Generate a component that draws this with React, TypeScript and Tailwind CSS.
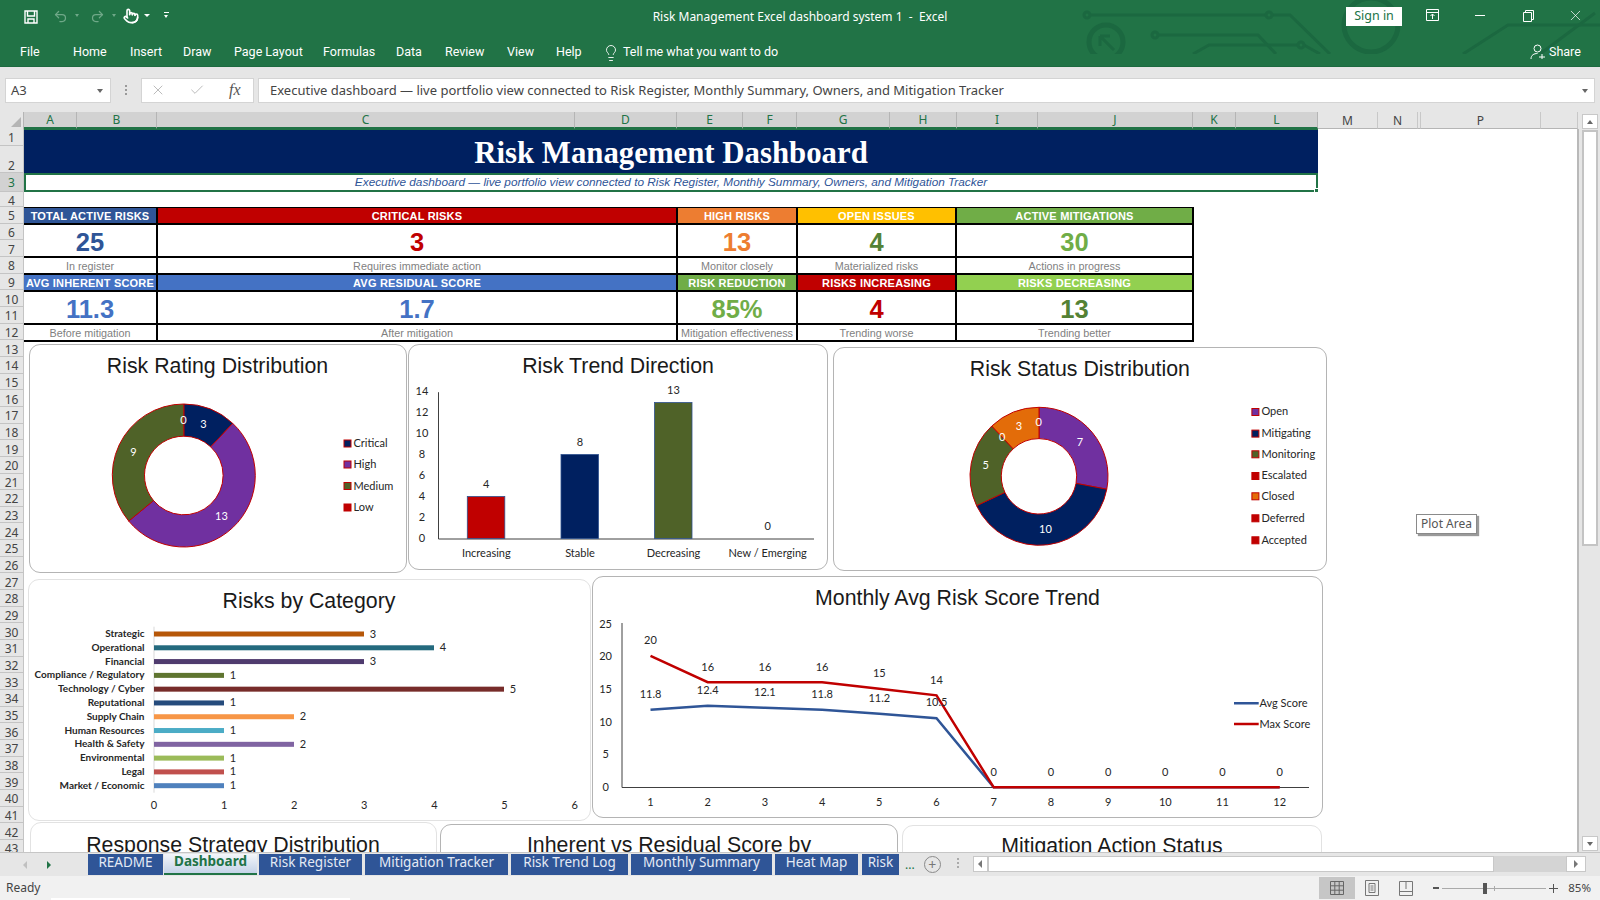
import type { ReactNode } from "react";
import { Check, Lightbulb, Pointer, Redo2, Undo2, X } from "lucide-react";

const sans = "font-['Liberation_Sans',Arial,sans-serif]";

const ribbonTabs = [
  { label: "File", cls: "w-[53px]" },
  { label: "Home", cls: "w-[57px]" },
  { label: "Insert", cls: "w-[53px]" },
  { label: "Draw", cls: "w-[51px]" },
  { label: "Page Layout", cls: "w-[89px]" },
  { label: "Formulas", cls: "w-[73px]" },
  { label: "Data", cls: "w-[49px]" },
  { label: "Review", cls: "w-[62px]" },
  { label: "View", cls: "w-[49px]" },
  { label: "Help", cls: "w-[49px]" },
];

const columns = [
  { label: "A", cls: "w-[53px]", on: true },
  { label: "B", cls: "w-[80px]", on: true },
  { label: "C", cls: "w-[418px]", on: true },
  { label: "D", cls: "w-[102px]", on: true },
  { label: "E", cls: "w-[66px]", on: true },
  { label: "F", cls: "w-[54px]", on: true },
  { label: "G", cls: "w-[93px]", on: true },
  { label: "H", cls: "w-[67px]", on: true },
  { label: "I", cls: "w-[81px]", on: true },
  { label: "J", cls: "w-[155px]", on: true },
  { label: "K", cls: "w-[43px]", on: true },
  { label: "L", cls: "w-[82px]", on: true },
  { label: "M", cls: "w-[60px]", on: false },
  { label: "N", cls: "w-[40px]", on: false },
  { label: "", cls: "w-[3px]", on: false },
  { label: "P", cls: "w-[120px]", on: false },
  { label: "", cls: "w-[37px]", on: false },
];

const rowHeads = [
  { n: 1, cls: "h-[17px] items-center" },
  { n: 2, cls: "h-[27px] items-center pt-[13px]" },
  { n: 3, cls: "h-[19px] items-center bg-[#d2d2d2] text-[#217346]" },
  { n: 4, cls: "h-[15px] items-center pt-[2px]" },
  ...Array.from({ length: 39 }, (_, i) => ({ n: i + 5, cls: "h-[16.67px] items-center pt-[2px]" })),
];

const kpiRows = [
  [
    { head: "TOTAL ACTIVE RISKS", bg: "bg-[#2f5597]", value: "25", color: "text-[#2f5597]", sub: "In register" },
    { head: "CRITICAL RISKS", bg: "bg-[#c00000]", value: "3", color: "text-[#c00000]", sub: "Requires immediate action" },
    { head: "HIGH RISKS", bg: "bg-[#ed7d31]", value: "13", color: "text-[#ed7d31]", sub: "Monitor closely" },
    { head: "OPEN ISSUES", bg: "bg-[#ffc000]", value: "4", color: "text-[#548235]", sub: "Materialized risks" },
    { head: "ACTIVE MITIGATIONS", bg: "bg-[#70ad47]", value: "30", color: "text-[#70ad47]", sub: "Actions in progress" },
  ],
  [
    { head: "AVG INHERENT SCORE", bg: "bg-[#4472c4]", value: "11.3", color: "text-[#4472c4]", sub: "Before mitigation" },
    { head: "AVG RESIDUAL SCORE", bg: "bg-[#4472c4]", value: "1.7", color: "text-[#4472c4]", sub: "After mitigation" },
    { head: "RISK REDUCTION", bg: "bg-[#70ad47]", value: "85%", color: "text-[#70ad47]", sub: "Mitigation effectiveness" },
    { head: "RISKS INCREASING", bg: "bg-[#c00000]", value: "4", color: "text-[#c00000]", sub: "Trending worse" },
    { head: "RISKS DECREASING", bg: "bg-[#92d050]", value: "13", color: "text-[#548235]", sub: "Trending better" },
  ],
];

const sheetTabs = [
  { label: "README", cls: "w-[75px] ml-[88px]" },
  { label: "Dashboard", cls: "w-[93px] ml-[1px]", active: true },
  { label: "Risk Register", cls: "w-[103px] ml-[2px]" },
  { label: "Mitigation Tracker", cls: "w-[143px] ml-[3px]" },
  { label: "Risk Trend Log", cls: "w-[117px] ml-[3px]" },
  { label: "Monthly Summary", cls: "w-[141px] ml-[3px]" },
  { label: "Heat Map", cls: "w-[83px] ml-[3px]" },
  { label: "Risk", cls: "w-[37px] ml-[4px]" },
];

const polar = (cx: number, cy: number, r: number, deg: number) => {
  const a = ((deg - 90) * Math.PI) / 180;
  return [cx + r * Math.cos(a), cy + r * Math.sin(a)];
};

const Donut = ({ cx, cy, r, inner, parts }: { cx: number; cy: number; r: number; inner: number; parts: { v: number; fill: string }[] }) => {
  const total = parts.reduce((s, p) => s + p.v, 0);
  let start = 0;
  return (
    <g>
      {parts.map((p, i) => {
        const end = start + (p.v / total) * 360;
        const [x1, y1] = polar(cx, cy, r, start);
        const [x2, y2] = polar(cx, cy, r, end);
        const [x3, y3] = polar(cx, cy, inner, end);
        const [x4, y4] = polar(cx, cy, inner, start);
        const big = end - start > 180 ? 1 : 0;
        const d = `M${x1} ${y1}A${r} ${r} 0 ${big} 1 ${x2} ${y2}L${x3} ${y3}A${inner} ${inner} 0 ${big} 0 ${x4} ${y4}Z`;
        start = end;
        return <path key={i} d={d} fill={p.fill} stroke="#c00000" strokeWidth="1" />;
      })}
    </g>
  );
};

const Label = ({ x, y, t, fill = "#262626", size = 11, anchor = "middle", weight }: { x: number; y: number; t: string; fill?: string; size?: number; anchor?: "middle" | "start" | "end"; weight?: number }) => (
  <text x={x} y={y - 1} fill={fill} fontSize={size} textAnchor={anchor} dominantBaseline="central" fontWeight={weight}>
    {t}
  </text>
);

const LegendRow = ({ x, y, t, fill }: { x: number; y: number; t: string; fill: string }) => (
  <g>
    <rect x={x + 0.5} y={y - 3.5} width="7" height="7" fill={fill} stroke="#c00000" strokeWidth="1" />
    <Label x={x + 10} y={y} t={t} anchor="start" />
  </g>
);

const Card = ({ cls, title, titleCls, box, children }: { cls: string; title: string; titleCls: string; box?: string; children?: ReactNode }) => (
  <div className={`shrink-0 flex flex-col rounded-[11px] border bg-white overflow-hidden ${cls}`}>
    <div className={`shrink-0 text-center text-[21.3px] leading-none text-[#1a1a1a] ${sans} ${titleCls}`}>{title}</div>
    {children && (
      <svg viewBox={box} className="w-full flex-1 min-h-0 overflow-visible font-['Lato',sans-serif]" preserveAspectRatio="xMinYMin meet">
        {children}
      </svg>
    )}
  </div>
);

const RatingChart = () => (
  <Card cls="w-[378px] h-[229px] border-[#b4b4b4]" titleCls="pt-[11px] h-[40px]" title="Risk Rating Distribution" box="29.5 384.5 376 187">
    <Donut cx={183.3} cy={475} r={71.5} inner={39.3} parts={[{ v: 3, fill: "#002060" }, { v: 13, fill: "#7030a0" }, { v: 9, fill: "#4f6228" }]} />
    <Label x={183} y={420} t="0" fill="#fff" />
    <Label x={203} y={424} t="3" fill="#fff" />
    <Label x={221} y={516} t="13" fill="#fff" />
    <Label x={133} y={452} t="9" fill="#fff" />
    <LegendRow x={343} y={443} t="Critical" fill="#002060" />
    <LegendRow x={343} y={464} t="High" fill="#7030a0" />
    <LegendRow x={343} y={485.5} t="Medium" fill="#4f6228" />
    <LegendRow x={343} y={507} t="Low" fill="#c00000" />
  </Card>
);

const TrendChart = () => {
  const bars = [
    { x: 467.3, top: 496, fill: "#c00000", t: "4", l: "Increasing", ly: 483.7 },
    { x: 561, top: 454, fill: "#002060", t: "8", l: "Stable", ly: 442 },
    { x: 654.5, top: 402, fill: "#4f6228", t: "13", l: "Decreasing", ly: 389.7 },
  ];
  return (
    <Card cls="w-[420px] h-[226px] ml-[1.5px] border-[#b4b4b4]" titleCls="pt-[11px] h-[40px]" title="Risk Trend Direction" box="409 384.5 418 184">
      {[14, 12, 10, 8, 6, 4, 2, 0].map((n) => (
        <Label key={n} x={422} y={538 - n * 10.48} t={String(n)} />
      ))}
      <path d="M438.5 391.7V538.5H814" fill="none" stroke="#404040" strokeWidth="1" />
      {bars.map((b) => (
        <g key={b.t}>
          <rect x={b.x} y={b.top} width="37.5" height={538 - b.top} fill={b.fill} stroke="#2f528f" strokeWidth="0.8" />
          <Label x={b.x + 19} y={b.ly} t={b.t} />
          <Label x={b.x + 19} y={553} t={b.l} />
        </g>
      ))}
      <Label x={767.7} y={526} t="0" />
      <Label x={767.7} y={553} t="New / Emerging" />
    </Card>
  );
};

const StatusChart = () => (
  <Card cls="w-[494.5px] h-[224px] ml-[4.6px] mt-[3px] border-[#b4b4b4]" titleCls="pt-[11px] h-[40px]" title="Risk Status Distribution" box="833.6 387.7 492.5 182">
    <Donut cx={1038.6} cy={476} r={69} inner={37.7} parts={[{ v: 7, fill: "#7030a0" }, { v: 10, fill: "#002060" }, { v: 5, fill: "#4f6228" }, { v: 3, fill: "#e36c09" }]} />
    <Label x={1079.6} y={442} t="7" fill="#fff" />
    <Label x={1045} y={529} t="10" fill="#fff" />
    <Label x={985.4} y={465} t="5" fill="#fff" />
    <Label x={1001.8} y={437} t="0" fill="#fff" />
    <Label x={1018.6} y={426} t="3" fill="#fff" />
    <Label x={1038.4} y={422} t="0" fill="#fff" />
    <LegendRow x={1251} y={411.7} t="Open" fill="#7030a0" />
    <LegendRow x={1251} y={433.3} t="Mitigating" fill="#002060" />
    <LegendRow x={1251} y={454} t="Monitoring" fill="#4f6228" />
    <LegendRow x={1251} y={475.7} t="Escalated" fill="#c00000" />
    <LegendRow x={1251} y={496} t="Closed" fill="#e36c09" />
    <LegendRow x={1251} y={518} t="Deferred" fill="#c00000" />
    <LegendRow x={1251} y={540} t="Accepted" fill="#c00000" />
  </Card>
);

const categories = [
  { l: "Strategic", v: 3, fill: "#b65708" },
  { l: "Operational", v: 4, fill: "#246a7e" },
  { l: "Financial", v: 3, fill: "#4f3b6e" },
  { l: "Compliance / Regulatory", v: 1, fill: "#5f7530" },
  { l: "Technology / Cyber", v: 5, fill: "#772c2a" },
  { l: "Reputational", v: 1, fill: "#254b7c" },
  { l: "Supply Chain", v: 2, fill: "#f79646" },
  { l: "Human Resources", v: 1, fill: "#4bacc6" },
  { l: "Health & Safety", v: 2, fill: "#8064a2" },
  { l: "Environmental", v: 1, fill: "#9bbb59" },
  { l: "Legal", v: 1, fill: "#c0504d" },
  { l: "Market / Economic", v: 1, fill: "#4f81bd" },
];

const CategoryChart = () => (
  <Card cls="w-[563px] h-[242px] mt-[3px] border-[#e2e2e2]" titleCls="pt-[11px] h-[44px]" title="Risks by Category" box="28.5 624 561 196">
    <path d="M153.5 626.7V792.7" stroke="#d9d9d9" strokeWidth="1" />
    {categories.map((c, i) => {
      const y = 634 + i * 13.79;
      return (
        <g key={c.l}>
          <Label x={144} y={y} t={c.l} anchor="end" weight={700} size={10} />
          <rect x={153.5} y={y - 2.5} width={c.v * 70} height="5" fill={c.fill} />
          <Label x={153.5 + c.v * 70 + 9} y={y} t={String(c.v)} />
        </g>
      );
    })}
    {[0, 1, 2, 3, 4, 5, 6].map((n) => (
      <Label key={n} x={153.5 + n * 70.1} y={805.7} t={String(n)} />
    ))}
  </Card>
);

const avg = [11.8, 12.4, 12.1, 11.8, 11.2, 10.5, 0, 0, 0, 0, 0, 0];
const max = [20, 16, 16, 16, 15, 14, 0, 0, 0, 0, 0, 0];
const px = (i: number) => 650.5 + i * 57.2;
const py = (v: number) => 787.3 - v * 6.57;
const pts = (vals: number[]) => vals.map((v, i) => `${px(i)},${py(v)}`).join(" ");

const MonthlyChart = () => (
  <Card cls="w-[731px] h-[242px] ml-[1.5px] border-[#b4b4b4]" titleCls="pt-[11px] h-[44px]" title="Monthly Avg Risk Score Trend" box="593 621 729 196">
    {[25, 20, 15, 10, 5, 0].map((n) => (
      <Label key={n} x={605.6} y={787.3 - n * 6.52} t={String(n)} />
    ))}
    <path d="M622 623V787.5H1309" fill="none" stroke="#404040" strokeWidth="1" />
    <polyline points={pts(avg)} fill="none" stroke="#2f5597" strokeWidth="2.5" />
    <polyline points={pts(max)} fill="none" stroke="#c00000" strokeWidth="2.5" />
    {avg.slice(0, 6).map((v, i) => (
      <Label key={i} x={px(i)} y={py(v) - 15.5} t={v.toFixed(1)} />
    ))}
    {max.map((v, i) => (
      <Label key={i} x={px(i)} y={py(v) - 15} t={String(v)} />
    ))}
    {avg.map((_, i) => (
      <Label key={i} x={px(i)} y={802} t={String(i + 1)} />
    ))}
    <path d="M1234 703.3H1258.7" stroke="#2f5597" strokeWidth="2.5" />
    <path d="M1234 724H1258.7" stroke="#c00000" strokeWidth="2.5" />
    <Label x={1259.5} y={703} t="Avg Score" anchor="start" />
    <Label x={1259.5} y={724} t="Max Score" anchor="start" />
  </Card>
);

// grid cells go row by row, so split each block into three lines
const KpiTable = () => {
  const cells = kpiRows.flatMap((row) => [
    row.map((k) => ({ key: k.head, cls: `${k.bg} pt-px text-[11px] font-bold text-white tracking-[0.2px]`, t: k.head })),
    row.map((k) => ({ key: k.head + "v", cls: `bg-white pt-[3px] text-[25.5px] font-bold ${k.color}`, t: k.value })),
    row.map((k) => ({ key: k.head + "s", cls: "bg-white pt-px text-[10.8px] text-[#7f7f7f]", t: k.sub })),
  ]).flat();
  return (
    <div className={`mt-[15px] w-[1170px] grid grid-cols-[132px_518px_118px_157px_235px] grid-rows-[15px_31px_15px_15px_31px_15px] gap-[2px] bg-black pt-px pr-[2px] pb-[2px] ${sans}`}>
      {cells.map((c) => (
        <div key={c.key} className={`flex items-center justify-center whitespace-nowrap overflow-hidden ${c.cls}`}>
          {c.t}
        </div>
      ))}
    </div>
  );
};

const TitleBar = () => (
  <div className="relative h-[67px] shrink-0 bg-[#217346] text-white border-b border-[#1d6a40] overflow-hidden">
    {/* Circuit decoration */}
    <svg className="absolute left-[1060px] top-0 h-[54px] w-[540px]" viewBox="1060 0 540 54" fill="none" stroke="#1b6840" strokeWidth="3">
      <circle cx="1087" cy="15" r="3" />
      <path d="M1090 15H1266M1272 15H1290L1330 54" />
      <circle cx="1269" cy="15" r="3" />
      <circle cx="1106" cy="42" r="17" strokeWidth="5" />
      <path d="M1100 36L1114 50M1100 36H1110M1100 36V46" />
      <circle cx="1155" cy="35" r="3" />
      <path d="M1158 35H1258L1276 54" />
      <path d="M1193 54L1209 45H1298M1304 45L1320 54" />
      <circle cx="1301" cy="45" r="3" />
      <circle cx="1371" cy="25" r="27" strokeWidth="5" />
      <path d="M1463 54L1508 25H1600" />
      <path d="M1540 54L1595 13" />
    </svg>
    <div className="relative flex h-[33px] items-center">
      <svg className="absolute left-[24px] top-[10px] h-[14px] w-[14px]" viewBox="0 0 14 14" fill="none" stroke="#fff" strokeWidth="1.4">
        <path d="M1 1H13V13H1Z" />
        <path d="M3.5 1V6H10.5V1M4 13V9H10V13" />
      </svg>
      <Undo2 className="absolute left-[53px] top-[9px] text-[#6fa888]" size={15} />
      <div className="absolute left-[75px] top-[14px] h-0 w-0 border-x-[2.5px] border-t-[3px] border-x-transparent border-t-[#6fa888]" />
      <Redo2 className="absolute left-[90px] top-[9px] text-[#6fa888]" size={15} />
      <div className="absolute left-[112px] top-[14px] h-0 w-0 border-x-[2.5px] border-t-[3px] border-x-transparent border-t-[#6fa888]" />
      <Pointer className="absolute left-[123px] top-[8px] text-white" size={16} strokeWidth={2.4} />
      <div className="absolute left-[144px] top-[14px] h-0 w-0 border-x-[3px] border-t-[3px] border-x-transparent border-t-white" />
      <div className="absolute left-[164px] top-[12px] h-px w-[5px] bg-white" />
      <div className="absolute left-[164px] top-[15px] h-0 w-0 border-x-[2.5px] border-t-[3px] border-x-transparent border-t-white" />
      <div className="w-full text-center text-[12px]">Risk Management Excel dashboard system 1&nbsp; -&nbsp; Excel</div>
      <div className="absolute left-[1346px] top-[7px] flex h-[19px] w-[56px] items-center justify-center bg-white text-[12.5px] text-[#217346]">Sign in</div>
      <svg className="absolute left-[1426px] top-[9px] h-[13px] w-[13px]" viewBox="0 0 13 13" fill="none" stroke="#fff">
        <path d="M.5 .5H12.5V11.5H.5ZM.5 3.5H12.5M6.5 10V5M4.5 7L6.5 5L8.5 7" />
      </svg>
      <div className="absolute left-[1475px] top-[15px] h-px w-[10px] bg-white" />
      <svg className="absolute left-[1523px] top-[10px] h-[12px] w-[11px]" viewBox="0 0 11 12" fill="none" stroke="#fff">
        <path d="M.5 2.5H8.5V11.5H.5ZM2.5 2.5V.5H10.5V9.5H8.5" />
      </svg>
      <X className="absolute left-[1567px] top-[7px]" size={17} strokeWidth={1} />
    </div>
    <div className="relative flex h-[33px] items-center pl-[20px] pt-[6px] font-['Roboto',sans-serif] text-[12.5px]">
      {ribbonTabs.map((t) => (
        <div key={t.label} className={t.cls}>{t.label}</div>
      ))}
      <Lightbulb size={18} strokeWidth={1.2} className="-ml-[3px] mr-[3px]" />
      <div>Tell me what you want to do</div>
      <div className="absolute left-[1530px] top-[10px] flex items-center gap-[3px]">
        <svg className="h-[16px] w-[16px]" viewBox="0 0 16 16" fill="none" stroke="#fff">
          <circle cx="7.5" cy="4.5" r="3.5" />
          <path d="M1 15C1 11 4 9.5 7.5 9.5M9 13H15M12 10V15" />
        </svg>
        <span>Share</span>
      </div>
    </div>
  </div>
);

const FormulaBar = () => (
  <div className="flex h-[45px] shrink-0 items-center bg-[#e6e6e6] pl-[5px] pr-[5px] pt-px text-[13px] text-[#444]">
    <div className="flex h-[25px] w-[106px] items-center justify-between border border-[#d4d4d4] bg-white pl-[5px] pr-[7px] pt-px">
      <span>A3</span>
      <div className="h-0 w-0 border-x-[3px] border-t-[4px] border-x-transparent border-t-[#666]" />
    </div>
    <div className="mx-[14px] flex flex-col gap-[2px]">
      <div className="h-[2px] w-[2px] bg-[#999]" />
      <div className="h-[2px] w-[2px] bg-[#999]" />
      <div className="h-[2px] w-[2px] bg-[#999]" />
    </div>
    <div className="flex h-[25px] w-[113px] items-center border border-[#d4d4d4] bg-white pl-[8px]">
      <X size={16} strokeWidth={1.5} className="text-[#bcbcbc]" />
      <Check size={16} strokeWidth={1.5} className="ml-[23px] text-[#bcbcbc]" />
      <span className="ml-[24px] font-['Liberation_Serif',serif] italic text-[16px] text-[#555]">fx</span>
    </div>
    <div className="ml-[4px] flex h-[25px] flex-1 items-center justify-between border border-[#d4d4d4] bg-white pl-[11px] pr-[6px] pt-px">
      <span>Executive dashboard — live portfolio view connected to Risk Register, Monthly Summary, Owners, and Mitigation Tracker</span>
      <div className="h-0 w-0 border-x-[3.5px] border-t-[4px] border-x-transparent border-t-[#666]" />
    </div>
  </div>
);

const ColumnHeader = () => (
  <div className="flex h-[17px] shrink-0 bg-[#e6e6e6] text-[12px] text-[#444]">
    <div className="flex w-[24px] items-end justify-end border-r border-[#b5b5b5] p-[2px]">
      <div className="h-0 w-0 border-b-[10px] border-l-[10px] border-b-[#b5b5b5] border-l-transparent" />
    </div>
    {columns.map((c, i) => (
      <div
        key={i}
        className={`flex items-center justify-center border-r pt-px ${c.cls} ${c.on ? "bg-[#d2d2d2] border-[#b5b5b5] border-b-2 border-b-[#217346] text-[#217346]" : "border-[#c8c8c8] border-b border-b-[#b5b5b5]"}`}
      >
        {c.label}
      </div>
    ))}
  </div>
);

const RowHeader = () => (
  <div className="w-[24px] shrink-0 overflow-hidden bg-[#e6e6e6] text-[12px] text-[#444]">
    {rowHeads.map((r) => (
      <div key={r.n} className={`flex justify-center border-b border-r border-[#c4c4c4] leading-[15px] ${r.cls}`}>
        {r.n}
      </div>
    ))}
  </div>
);

const VerticalScroll = () => (
  <div className="flex w-[21px] shrink-0 flex-col items-center bg-[#e6e6e6] pt-[2px] pb-[1px]">
    <div className="flex h-[15px] w-[16px] items-center justify-center border border-[#c8c8c8] bg-white">
      <div className="h-0 w-0 border-x-[3.5px] border-b-[4px] border-x-transparent border-b-[#666]" />
    </div>
    <div className="mt-px h-[416px] w-[16px] border-2 border-[#c4c4c4] bg-white" />
    <div className="flex-1" />
    <div className="flex h-[15px] w-[16px] items-center justify-center border border-[#c8c8c8] bg-white">
      <div className="h-0 w-0 border-x-[3.5px] border-t-[4px] border-x-transparent border-t-[#666]" />
    </div>
  </div>
);

const Sheet = () => (
  <div className="relative flex-1 overflow-hidden border-r-2 border-[#b9b9b9] bg-white">
    <div className="flex h-[44px] w-[1294px] items-center justify-center border-t border-[#217346] bg-[#002060] pt-[4px] font-['Liberation_Serif',serif] text-[30.8px] font-bold text-white">
      Risk Management Dashboard
    </div>
    <div className={`relative flex h-[19px] w-[1294px] items-center justify-center border-2 border-[#217346] pt-px text-[11.8px] italic text-[#2f5597] ${sans}`}>
      Executive dashboard — live portfolio view connected to Risk Register, Monthly Summary, Owners, and Mitigation Tracker
      <div className="absolute -bottom-[3px] -right-[3px] h-[5px] w-[5px] border border-white bg-[#217346]" />
    </div>
    <KpiTable />
    <div className="ml-[4.5px] mt-[1.5px] flex items-start">
      <RatingChart />
      <TrendChart />
      <StatusChart />
    </div>
    <div className="ml-[3.5px] mt-[3.3px] flex items-start">
      <CategoryChart />
      <MonthlyChart />
    </div>
    <div className="ml-[5.5px] flex items-start">
      <Card cls="w-[407px] h-[200px] mt-[1.5px] border-[#e2e2e2]" titleCls="pt-[12px]" title="Response Strategy Distribution" />
      <Card cls="w-[458px] h-[200px] mt-[3.5px] ml-[3.5px] border-[#b4b4b4]" titleCls="pt-[10px]" title="Inherent vs Residual Score by" />
      <Card cls="w-[420px] h-[200px] mt-[4px] ml-[4px] border-[#e2e2e2]" titleCls="pt-[10px]" title="Mitigation Action Status" />
    </div>
    {/* Chart tooltip */}
    <div className="absolute left-[1392px] top-[385px] flex h-[20px] w-[61px] items-center justify-center border border-[#8a8a8a] bg-white text-[12px] text-[#555] shadow-[2px_2px_1px_#9a9a9a]">
      Plot Area
    </div>
  </div>
);

const TabBar = () => (
  <div className="relative flex h-[24px] shrink-0 items-start border-t border-[#c6c6c6] bg-[#e6e6e6] pt-px text-[13.5px]">
    <div className="absolute left-[23px] top-[8px] h-0 w-0 border-y-[4px] border-r-[4px] border-y-transparent border-r-[#c0c0c0]" />
    <div className="absolute left-[47px] top-[8px] h-0 w-0 border-y-[4px] border-l-[4px] border-y-transparent border-l-[#217346]" />
    {sheetTabs.map((t) => (
      <div
        key={t.label}
        className={`flex h-[21px] shrink-0 items-center justify-center overflow-hidden pb-[4px] ${t.cls} ${t.active ? "bg-gradient-to-b from-[#f4f6fa] to-[#c5d3e8] border-b-2 border-[#217346] font-bold text-[#217346]" : "bg-[#2f5597] text-[#e4eaf5]"}`}
      >
        {t.label}
      </div>
    ))}
    <div className="ml-[6px] mt-[4px] text-[12px] leading-[14px] text-[#217346]">...</div>
    <div className="ml-[9px] mt-[2px] flex h-[17px] w-[17px] items-center justify-center rounded-full border border-[#8a8a8a] text-[14px] leading-none text-[#777]">+</div>
    <div className="ml-[16px] mt-[4px] flex flex-col gap-[2px]">
      <div className="h-[2px] w-[2px] bg-[#aaa]" />
      <div className="h-[2px] w-[2px] bg-[#aaa]" />
      <div className="h-[2px] w-[2px] bg-[#aaa]" />
    </div>
    <div className="ml-[14px] mt-[2px] flex h-[16px] w-[613px] bg-[#d4d4d4]">
      <div className="flex w-[15px] items-center justify-center border border-[#c8c8c8] bg-white">
        <div className="h-0 w-0 border-y-[4px] border-r-[4px] border-y-transparent border-r-[#777]" />
      </div>
      <div className="w-[506px] border border-[#c8c8c8] bg-white" />
      <div className="flex-1" />
      <div className="flex w-[20px] items-center justify-center border border-[#c8c8c8] bg-white">
        <div className="h-0 w-0 border-y-[4px] border-l-[4px] border-y-transparent border-l-[#777]" />
      </div>
    </div>
  </div>
);

const StatusBar = () => (
  <div className="relative flex h-[24px] shrink-0 items-center bg-[#f1f1f1] pl-[6px] text-[12px] text-[#444]">
    <span>Ready</span>
    <div className="absolute bottom-0 left-[51px] h-[2px] w-[299px] bg-white" />
    <div className="flex-1" />
    <div className="flex h-[22px] w-[36px] items-center justify-center bg-[#c6c6c6]">
      <svg className="h-[14px] w-[14px]" viewBox="0 0 14 14" fill="none" stroke="#666">
        <path d="M.5 .5H13.5V13.5H.5ZM.5 4.8H13.5M.5 9.2H13.5M4.8 .5V13.5M9.2 .5V13.5" />
      </svg>
    </div>
    <svg className="ml-[10px] h-[16px] w-[14px]" viewBox="0 0 14 16" fill="none" stroke="#777">
      <path d="M.5 .5H13.5V15.5H.5ZM4 3.5H10V12.5H4ZM5.5 6H8.5M5.5 8H8.5M5.5 10H8.5" />
    </svg>
    <svg className="ml-[20px] h-[15px] w-[14px]" viewBox="0 0 14 15" fill="none" stroke="#777">
      <path d="M.5 .5H13.5V14.5H.5ZM.5 10.5H13.5M7 .5V8" />
    </svg>
    <div className="ml-[20px] h-[2px] w-[6px] bg-[#555]" />
    <div className="relative ml-[3px] h-px w-[104px] bg-[#aaa]">
      <div className="absolute left-[41px] -top-[5px] h-[11px] w-[4px] bg-[#555]" />
      <div className="absolute left-[52px] -top-[2px] h-[5px] w-px bg-[#aaa]" />
    </div>
    <div className="relative ml-[3px] h-[9px] w-[9px]">
      <div className="absolute left-0 top-[4px] h-px w-[9px] bg-[#555]" />
      <div className="absolute left-[4px] top-0 h-[9px] w-px bg-[#555]" />
    </div>
    <span className="ml-[10px] mr-[9px] text-[11.5px]">85%</span>
  </div>
);

export default function App() {
  return (
    <div className="flex h-[900px] w-[1600px] flex-col overflow-hidden bg-white font-['Noto_Sans',sans-serif]">
      <TitleBar />
      <FormulaBar />
      <div className="flex h-[740px] shrink-0">
        <div className="flex w-[1579px] flex-col">
          <ColumnHeader />
          <div className="flex h-[723px]">
            <RowHeader />
            <Sheet />
          </div>
        </div>
        <VerticalScroll />
      </div>
      <TabBar />
      <StatusBar />
    </div>
  );
}
